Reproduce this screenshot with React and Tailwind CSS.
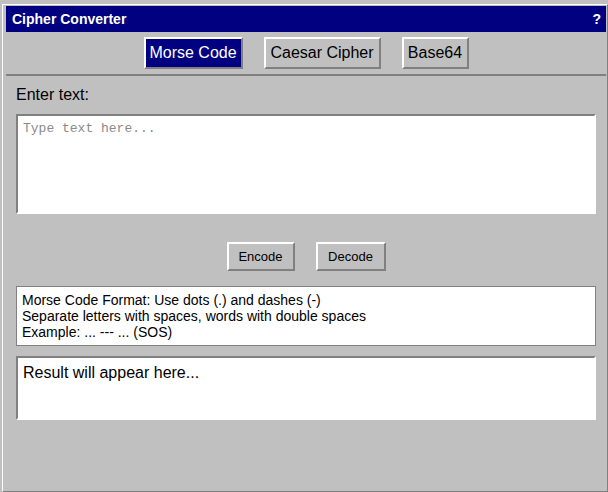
import { useState } from 'react';

const tabs = [
    { nombre: 'Morse Code', ancho: 'w-[99px]' },
    { nombre: 'Caesar Cipher', ancho: 'w-[117px]' },
    { nombre: 'Base64', ancho: 'w-[67px]' },
];

const App = () => {
    const [tab, setTab] = useState('Morse Code');
    const [text, setText] = useState('');

    return (
        <div className="h-[492px] w-[608px] overflow-hidden bg-[#c0c0c0] pl-[2px] pt-[4px] font-['Liberation_Sans',Arial,sans-serif] text-black">
            <div className="flex h-[488px] flex-col border-t border-l border-white border-r border-b border-r-[#808080] border-b-[#808080] pt-[1px] pl-[3px] pr-[1px]">
                {/* Barra de titulo */}
                <div className="flex h-[26px] items-center justify-between bg-[#000080] pl-[6px] pr-[5px] text-[14px] font-bold text-white">
                    <span>Cipher Converter</span>
                    <span>?</span>
                </div>

                {/* Pestañas */}
                <div className="flex justify-center gap-[21px] border-b-2 border-[#808080] pt-[5px] pb-[5px]">
                    {tabs.map((t) => (
                        <button
                            key={t.nombre}
                            type="button"
                            onClick={() => setTab(t.nombre)}
                            className={`h-[32px] ${t.ancho} border-2 border-t-white border-l-white border-r-[#808080] border-b-[#808080] text-[16px] leading-[18px] ${
                                tab === t.nombre ? 'bg-[#000080] text-white' : 'bg-[#c0c0c0] text-black'
                            }`}
                        >
                            {t.nombre}
                        </button>
                    ))}
                </div>

                {/* Contenido */}
                <div className="flex flex-col px-[10px] pt-[10px]">
                    <label className="mb-[10px] text-[16px] leading-[18px]">Enter text:</label>
                    <textarea
                        value={text}
                        onChange={(e) => setText(e.target.value)}
                        placeholder="Type text here..."
                        className="h-[100px] w-full resize-none border-2 border-t-[#808080] border-l-[#808080] border-r-white border-b-white bg-white px-[5px] py-[5px] font-['Liberation_Mono','Courier_New',monospace] text-[13px] leading-[16px] outline-none placeholder:text-[#8a8a8a]"
                    />

                    <div className="mt-[28px] flex justify-center gap-[21px]">
                        <button
                            type="button"
                            className="h-[29px] w-[68px] border-2 border-t-white border-l-white border-r-[#808080] border-b-[#808080] bg-[#c0c0c0] text-[13px] leading-[15px]"
                        >
                            Encode
                        </button>
                        <button
                            type="button"
                            className="h-[29px] w-[70px] border-2 border-t-white border-l-white border-r-[#808080] border-b-[#808080] bg-[#c0c0c0] text-[13px] leading-[15px]"
                        >
                            Decode
                        </button>
                    </div>

                    <div className="mt-[15px] h-[60px] border border-[#808080] bg-white px-[5px] py-[5px] text-[14px] leading-[16px]">
                        <div>Morse Code Format: Use dots (.) and dashes (-)</div>
                        <div>Separate letters with spaces, words with double spaces</div>
                        <div>Example: ... --- ... (SOS)</div>
                    </div>

                    <div className="mt-[10px] h-[64px] border-2 border-t-[#808080] border-l-[#808080] border-r-white border-b-white bg-white px-[5px] py-[6px] text-[16px] leading-[18px]">
                        Result will appear here...
                    </div>
                </div>
            </div>
        </div>
    );
};

export default App;
